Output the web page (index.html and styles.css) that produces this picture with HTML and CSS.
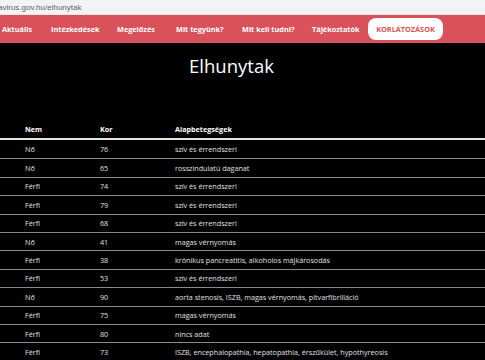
FILE: index.html
```html
<!DOCTYPE html>
<html lang="hu">
<head>
<meta charset="utf-8">
<title>Elhunytak</title>
<link rel="stylesheet" href="styles.css">
</head>
<body>
<div class="urlbar"><span class="url">avirus.gov.hu/elhunytak</span></div>
<nav class="nav">
  <a class="nav-item">Aktuális</a>
  <a class="nav-item">Intézkedések</a>
  <a class="nav-item">Megelőzés</a>
  <a class="nav-item">Mit tegyünk?</a>
  <a class="nav-item">Mit kell tudni?</a>
  <a class="nav-item">Tájékoztatók</a>
  <a class="nav-btn">KORLÁTOZÁSOK</a>
</nav>
<main class="main">
  <h1 class="title">Elhunytak</h1>
  <table class="tbl">
    <thead>
      <tr><th>Nem</th><th>Kor</th><th>Alapbetegségek</th></tr>
    </thead>
    <tbody>
      <tr><td>Nő</td><td>76</td><td>szív és érrendszeri</td></tr>
      <tr><td>Nő</td><td>65</td><td>rosszindulatú daganat</td></tr>
      <tr><td>Férfi</td><td>74</td><td>szív és érrendszeri</td></tr>
      <tr><td>Férfi</td><td>79</td><td>szív és érrendszeri</td></tr>
      <tr><td>Férfi</td><td>68</td><td>szív és érrendszeri</td></tr>
      <tr><td>Nő</td><td>41</td><td>magas vérnyomás</td></tr>
      <tr><td>Férfi</td><td>38</td><td>krónikus pancreatitis, alkoholos májkárosodás</td></tr>
      <tr><td>Férfi</td><td>53</td><td>szív és érrendszeri</td></tr>
      <tr><td>Nő</td><td>90</td><td>aorta stenosis, ISZB, magas vérnyomás, pitvarfibrilláció</td></tr>
      <tr><td>Férfi</td><td>75</td><td>magas vérnyomás</td></tr>
      <tr><td>Férfi</td><td>80</td><td>nincs adat</td></tr>
      <tr><td>Férfi</td><td>73</td><td>ISZB, encephalopathia, hepatopathia, érszűkület, hypothyreosis</td></tr>
    </tbody>
  </table>
</main>
</body>
</html>
```

FILE: styles.css
```css
html, body {
  margin: 0;
  padding: 0;
  background: #000;
  font-family: "Open Sans", "DejaVu Sans", sans-serif;
  overflow: hidden;
}
.urlbar {
  height: 15px;
  background: #f1f3f4;
  display: flex;
  align-items: center;
  border-bottom: 1px solid #e6e6e6;
  box-sizing: border-box;
}
.url {
  font-size: 8px;
  color: #5f6368;
  margin-left: -2px;
  font-family: "Liberation Sans", sans-serif;
}
.nav {
  height: 28px;
  background: #d9525b;
  display: grid;
  grid-template-columns: 49px 66px 59px 66px 70px 56px 75px;
  align-items: center;
  padding-left: 2px;
}
.nav-item {
  color: #fff;
  font-weight: 700;
  font-size: 7.3px;
  white-space: nowrap;
}
.nav-btn {
  background: #fff;
  color: #d9525b;
  font-weight: 700;
  font-size: 7.3px;
  border-radius: 8px;
  height: 22px;
  display: flex;
  align-items: center;
  justify-content: center;
  box-sizing: border-box;
}
.main {
  padding-top: 11px;
}
.title {
  margin: 0 0 0 -22px;
  text-align: center;
  color: #fff;
  font-weight: 400;
  font-size: 18.5px;
  line-height: 24px;
}
.tbl {
  margin-top: 42px;
  width: 100%;
  border-collapse: collapse;
}
.tbl th {
  color: #fff;
  font-weight: 700;
  font-size: 7.2px;
  text-align: left;
  height: 18px;
  padding: 0;
  border-bottom: 2px solid #e6e6e6;
}
.tbl td {
  color: #e0e0e0;
  font-size: 7.2px;
  height: 17.4px;
  padding: 0;
  border-bottom: 1px solid #8a8a8a;
}
.tbl tbody tr:first-child td {
  height: 18.4px;
}
.tbl th:first-child, .tbl td:first-child {
  padding-left: 25px;
  width: 75px;
}
.tbl th:nth-child(2), .tbl td:nth-child(2) {
  width: 75px;
}
```
